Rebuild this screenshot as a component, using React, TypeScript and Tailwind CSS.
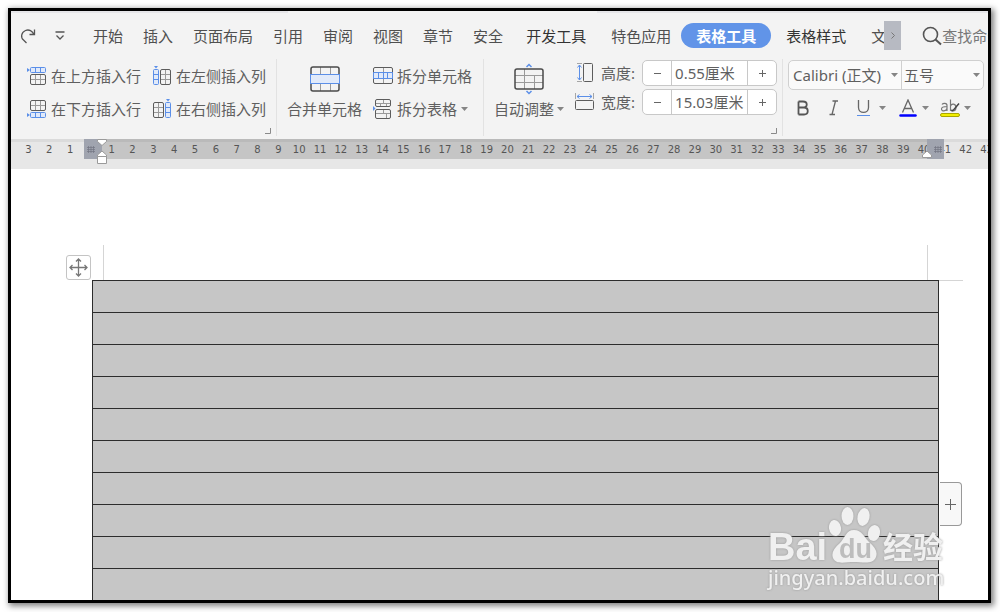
import type { ReactNode } from "react";

const blue = "#5b8fe8";
const ink = "#5c5c5c";

const Caret = ({ className = "" }: { className?: string }) => (
  <svg aria-hidden="true" className={`shrink-0 ${className}`} height="4" viewBox="0 0 7 4" width="7">
    <path d="M0 0h7L3.500 4z" fill="#858585" />
  </svg>
);

const Corner = () => (
  <button aria-label="更多设置" className="absolute right-[5px] bottom-[2px]" type="button">
    <svg height="6" viewBox="0 0 6 6" width="6">
      <path d="M5.500 0v5.500H0" fill="none" stroke="#8a8a8a" />
    </svg>
  </button>
);

const RowIcon = ({ below = false }: { below?: boolean }) => (
  <svg aria-hidden="true" fill="none" height="20" viewBox="0 0 20 20" width="20">
    <g transform={below ? "matrix(1 0 0 -1 0 20)" : undefined}>
      <path d="M0 2v4l3-2z" fill={blue} />
      <rect fill="#e1eafa" height="5" rx="1" stroke={blue} width="15" x="3.500" y="1.500" />
      <path d="M8.500 1.500v5M13.500 1.500v5" stroke={blue} />
      <path d="M4 13.500h15M8.500 9v10M13.500 9v10" stroke="#9a9a9a" />
      <rect height="10" rx="1.500" stroke={ink} width="15" x="3.500" y="8.500" />
    </g>
  </svg>
);

const ColumnIcon = ({ right = false }: { right?: boolean }) => (
  <svg aria-hidden="true" fill="none" height="20" viewBox="0 0 20 20" width="20">
    <g transform={right ? "matrix(-1 0 0 1 20 0)" : undefined}>
      <path d="M2 0h4L4 2.500z" fill={blue} />
      <rect fill="#e1eafa" height="15" rx="1" stroke={blue} width="5" x="1.500" y="3.500" />
      <path d="M1.500 8.500h5M1.500 13.500h5" stroke={blue} />
      <path d="M9 8.500h10M9 13.500h10M13.500 4v15" stroke="#9a9a9a" />
      <rect height="15" rx="1.500" stroke={ink} width="10" x="8.500" y="3.500" />
    </g>
  </svg>
);

const MergeIcon = () => (
  <svg aria-hidden="true" fill="none" height="26" viewBox="0 0 30 26" width="30">
    <path d="M10.500 1v24M20.500 1v24" stroke="#9a9a9a" />
    <rect height="24" rx="2" stroke="#4a4a4a" strokeWidth="1.500" width="28" x="1" y="1" />
    <rect fill="#e1eafa" height="9" stroke={blue} width="29" x="0.500" y="8.500" />
  </svg>
);

const SplitCellIcon = () => (
  <svg aria-hidden="true" fill="none" height="18" viewBox="0 0 20 18" width="20">
    <path d="M10.500 1v5M10.500 12v5" stroke="#9a9a9a" />
    <rect height="16" rx="1.500" stroke={ink} width="19" x="0.500" y="0.500" />
    <path d="M.5 5.500h19v6H.5zM5.500 5.500v6M10.500 5.500v6M14.500 5.500v6" fill="#e1eafa" stroke={blue} />
  </svg>
);

const SplitTableIcon = () => (
  <svg aria-hidden="true" fill="none" height="20" viewBox="0 0 20 20" width="20">
    <path d="M0 7v5l2.500-2.500z" fill={blue} />
    <path d="M3 4.500h15M10.500 1v3M7.500 5v3M13.500 5v3M3 14.500h15M10.500 11v4M13.500 15v4" stroke="#9a9a9a" />
    <rect height="7" rx="1.500" stroke={ink} width="15" x="2.500" y="0.500" />
    <rect height="9" rx="1.500" stroke={ink} width="15" x="2.500" y="10.500" />
  </svg>
);

const AutoFitIcon = () => (
  <svg aria-hidden="true" fill="none" height="32" viewBox="0 0 30 32" width="30">
    <path d="M12.500 4L15 1.500 17.500 4M12.500 28l2.500 2.500 2.500-2.500" stroke={blue} strokeWidth="1.500" />
    <path d="M1 12.500h28M1 19.500h28M10.500 6v7M10.500 19v7M10.500 13v6M20.500 13v13" stroke="#9a9a9a" />
    <rect height="20" rx="2" stroke="#4a4a4a" strokeWidth="1.500" width="28" x="1" y="6" />
  </svg>
);

const HeightIcon = () => (
  <svg aria-hidden="true" fill="none" height="20" viewBox="0 0 20 20" width="20">
    <path d="M2 .5h5M2 18.500h5" stroke="#a5a5a5" />
    <path d="M4.500 2v15M2.500 4.500l2-2.500 2 2.500M2.500 14.500l2 2.500 2-2.500" stroke={blue} />
    <rect height="18" rx="1" stroke={ink} width="9" x="8.500" y="0.500" />
  </svg>
);

const WidthIcon = () => (
  <svg aria-hidden="true" fill="none" height="20" viewBox="0 0 20 20" width="20">
    <path d="M.5 1v6M18.500 1v6" stroke="#a5a5a5" />
    <path d="M2 4.500h15M4.500 2.500l-2.500 2 2.500 2M14.500 2.500l2.500 2-2.500 2" stroke={blue} />
    <rect height="9" rx="1" stroke={ink} width="18" x="0.500" y="8.500" />
  </svg>
);

const Tool = ({ icon, children }: { icon: ReactNode; children: ReactNode }) => (
  <button className="flex h-[33px] items-center gap-1 whitespace-nowrap" type="button">
    <span className="flex w-5 justify-center">{icon}</span>
    {children}
  </button>
);

const Stepper = ({ id, label, value, icon }: { id: string; label: string; value: string; icon: ReactNode }) => (
  <div className="flex items-center">
    {icon}
    <label className="ml-[6px] w-[41px]" htmlFor={id}>
      {label}
    </label>
    <div className="flex h-[26px] w-[135px] rounded-[5px] border border-[#c8c8c8] bg-white">
      <button aria-label="减少" className="flex w-7 items-center justify-center" type="button">
        <svg height="9" viewBox="0 0 9 9" width="9">
          <path d="M1 4.500h7" stroke="#666" />
        </svg>
      </button>
      <input
        className="w-[77px] min-w-0 border-x border-[#c8c8c8] pl-[3px] outline-none"
        defaultValue={value}
        id={id}
        type="text"
      />
      <button aria-label="增加" className="flex flex-1 items-center justify-center" type="button">
        <svg height="9" viewBox="0 0 9 9" width="9">
          <path d="M1 4.500h7M4.500 1v7" stroke="#666" />
        </svg>
      </button>
    </div>
  </div>
);

const tabs = ["开始", "插入", "页面布局", "引用", "审阅", "视图", "章节", "安全"];

const TabBar = () => (
  <nav aria-label="功能区" className="flex h-[29px] items-center whitespace-nowrap text-[#4f4f4f]">
    <button aria-label="恢复" className="ml-[9px] w-4" type="button">
      <svg fill="none" height="16" viewBox="0 0 16 16" width="16">
        <path d="M14.500 1.500v5h-5M14 6.500C12.500 3 9 1 5.500 2.500 1 4.500.5 9.500 3.500 12L6.500 15" stroke="#555" strokeWidth="1.300" />
      </svg>
    </button>
    <button aria-label="自定义快速访问工具栏" className="ml-[19px] w-[10px]" type="button">
      <svg fill="none" height="10" viewBox="0 0 10 10" width="10">
        <path d="M.5 1h9M1.500 4.500L5 8l3.500-3.500" stroke="#555" strokeWidth="1.300" />
      </svg>
    </button>
    <div className="ml-7 flex gap-5">
      {tabs.map((tab) => (
        <button key={tab} type="button">
          {tab}
        </button>
      ))}
    </div>
    <button className="ml-[23px] text-[#333]" type="button">
      开发工具
    </button>
    <button className="ml-[25px]" type="button">
      特色应用
    </button>
    <button className="ml-[10px] h-[25px] w-[90px] rounded-full bg-[#6194e8] font-bold text-white" type="button">
      表格工具
    </button>
    <button className="ml-[15px] text-[#333]" type="button">
      表格样式
    </button>
    <button className="ml-[25px] w-[13px] overflow-hidden" type="button">
      文
    </button>
    <button aria-label="更多选项卡" className="flex h-full w-[17px] items-center justify-center bg-[#b7bac2]" type="button">
      <svg fill="none" height="7" viewBox="0 0 4 7" width="4">
        <path d="M.5.5l3 3-3 3" stroke="#777" />
      </svg>
    </button>
    <button className="ml-[21px] flex min-w-0 flex-1 items-center overflow-hidden text-[#777]" type="button">
      <svg className="shrink-0" fill="none" height="20" viewBox="0 0 20 20" width="20">
        <circle cx="8.500" cy="8.500" r="7" stroke="#555" strokeWidth="1.600" />
        <path d="M13.500 13.500l5.500 5" stroke="#555" strokeWidth="2" />
      </svg>
      查找命令
    </button>
  </nav>
);

const Toolbar = () => (
  <div className="flex h-[89px] pt-[9px] pb-[3px]">
    <div className="relative flex gap-[11px] border-r border-[#e2e2e2] pr-[10px] pl-4">
      <div>
        <Tool icon={<RowIcon />}>在上方插入行</Tool>
        <Tool icon={<RowIcon below />}>在下方插入行</Tool>
      </div>
      <div>
        <Tool icon={<ColumnIcon />}>在左侧插入列</Tool>
        <Tool icon={<ColumnIcon right />}>在右侧插入列</Tool>
      </div>
      <Corner />
    </div>
    <div className="flex gap-[11px] border-r border-[#e2e2e2] pr-[11px] pl-[10px]">
      <button className="flex h-[66px] flex-col items-center whitespace-nowrap" type="button">
        <span className="flex h-[39px] items-center">
          <MergeIcon />
        </span>
        合并单元格
      </button>
      <div>
        <Tool icon={<SplitCellIcon />}>拆分单元格</Tool>
        <Tool icon={<SplitTableIcon />}>
          拆分表格
          <Caret />
        </Tool>
      </div>
    </div>
    <div className="relative flex gap-[11px] border-r border-[#e2e2e2] pr-[5px] pl-[10px]">
      <button className="flex h-[66px] flex-col whitespace-nowrap" type="button">
        <span className="flex h-[39px] w-[69px] items-center justify-center">
          <AutoFitIcon />
        </span>
        <span className="flex items-center gap-[3px]">
          自动调整
          <Caret />
        </span>
      </button>
      <div className="flex flex-col gap-[3px] pt-px">
        <Stepper icon={<HeightIcon />} id="row-height" label="高度:" value="0.55厘米" />
        <Stepper icon={<WidthIcon />} id="column-width" label="宽度:" value="15.03厘米" />
      </div>
      <Corner />
    </div>
    <div className="w-[201px] pt-px pl-[5px]">
      <div className="flex h-[30px] rounded-[5px] border border-[#d0d0d0] bg-[#fafafa]">
        <div className="flex w-[113px] items-center border-r border-[#d0d0d0]">
          <select aria-label="字体" className="w-[102px] appearance-none pl-1 outline-none">
            <option>Calibri (正文)</option>
          </select>
          <Caret />
        </div>
        <div className="flex flex-1 items-center">
          <select aria-label="字号" className="w-[71px] appearance-none pl-[2px] outline-none">
            <option>五号</option>
          </select>
          <Caret />
        </div>
      </div>
      <div className="flex h-[35px] items-center">
        <button aria-label="加粗" className="flex w-[30px] justify-center" type="button">
          <svg fill="none" height="16" viewBox="0 0 12 16" width="12">
            <path d="M1.500 1.500v13M1.500 1.500H6c5 0 5 6 0 6H1.500H7c5 0 5 7 0 7H1.500" stroke="#555" strokeWidth="1.800" />
          </svg>
        </button>
        <button aria-label="倾斜" className="flex w-8 justify-center" type="button">
          <svg fill="none" height="16" viewBox="0 0 10 16" width="10">
            <path d="M3.500 1H9M.5 14.500H6M6.500 1l-3.500 13.500" stroke="#666" strokeWidth="1.300" />
          </svg>
        </button>
        <button aria-label="下划线" className="flex w-7 justify-center" type="button">
          <svg fill="none" height="18" viewBox="0 0 14 18" width="14">
            <path d="M1.500 1v7.500c0 6.500 10 6.500 10 0V1" stroke="#666" strokeWidth="1.300" />
            <path d="M0 16.500h13" stroke={blue} />
          </svg>
        </button>
        <Caret className="ml-px" />
        <button aria-label="字体颜色" className="ml-[13px]" type="button">
          <svg fill="none" height="18" viewBox="0 0 18 18" width="18">
            <path d="M3.500 13.500L9 1l5.500 12.500M5 9.500h8" stroke="#666" strokeWidth="1.300" />
            <path d="M1.500 16.500h15" stroke="#0000fe" strokeLinecap="round" strokeWidth="2.500" />
          </svg>
        </button>
        <Caret className="ml-[5px]" />
        <button aria-label="突出显示" className="ml-[11px]" type="button">
          <svg fill="none" height="18" viewBox="0 0 20 18" width="20">
            <path
              d="M2 5.500C3 4 7 3.500 7 6.500V12M7 7.500C4 7.500 1.500 8 1.500 10c0 2.500 4.500 2.500 5.500-.5M10.500.5V12M10.500 7c1-3 5.500-2.500 5.500 1.500s-4.500 4.500-5.500 1.500"
              stroke="#777"
              strokeWidth="1.200"
            />
            <path d="M19 4.500l-5.500 6.500-2 1" stroke="#444" strokeWidth="1.500" />
            <rect fill="#f2ee00" height="3" rx="1.500" stroke="#a9a600" width="19" x="0.500" y="14.500" />
          </svg>
        </button>
        <Caret className="ml-1" />
      </div>
    </div>
  </div>
);

const marks = ["3", "2", "1", "", ...Array.from({ length: 43 }, (_, i) => String(i + 1))];

const Grip = () => (
  <svg fill="none" height="7" viewBox="0 0 8 7" width="8">
    <path d="M0 1.500h8M0 3.500h8M0 5.500h8M1.500 0v7M4 0v7M6.500 0v7" stroke="#737683" strokeWidth="0.700" />
  </svg>
);

const Ruler = () => (
  <div className="relative h-[30px] overflow-hidden bg-[#e7e7e7]">
    <div className="mr-11 ml-[73px] h-5 bg-[#c5c5c5]" />
    <div className="absolute inset-x-0 top-0 h-[3px] bg-black/5" />
    <div className="absolute top-px right-[-9px] left-[7px] flex h-5 items-center font-['DejaVu_Sans'] text-[10px] text-[#555]">
      {marks.map((mark, i) => (
        <span className="w-0 flex-1 text-center" key={i}>
          {mark}
        </span>
      ))}
    </div>
    <div className="absolute top-0 left-[73px] flex h-5 w-[18px] items-center justify-center bg-[#a0a4af] pr-[5px]">
      <Grip />
    </div>
    <div className="absolute top-0 right-11 flex h-5 w-[17px] items-center justify-center bg-[#a0a4af] pl-1">
      <Grip />
    </div>
    <svg className="absolute top-0 left-[86px]" fill="#fff" height="27" viewBox="0 0 10 27" width="10">
      <path d="M.5.5h9v2L5 6.500.5 2.500zM.5 17.500V16L5 12l4.500 4v1.500zM.5 17.500h9v7h-9z" stroke="#9a9a9a" />
    </svg>
    <svg className="absolute top-[11px] right-[56px]" fill="#fff" height="9" viewBox="0 0 10 9" width="10">
      <path d="M.5 7.500V5L5 1l4.500 4v2.500z" stroke="#9a9a9a" />
    </svg>
  </div>
);

const Watermark = () => (
  <div className="absolute right-[41px] bottom-[9px] w-[179px] text-[#f0f0f0] drop-shadow-[0_0_1px_#999]">
    <div className="flex h-[62px] items-end whitespace-nowrap">
      <span className="w-[60px] font-['Liberation_Sans'] text-[38px] leading-[34px] font-bold">Bai</span>
      <div className="relative h-[62px] w-[55px]">
        <svg height="62" viewBox="0 0 55 62" width="55">
          <g fill="#f0f0f0">
            <ellipse cx="7" cy="26" rx="6" ry="8" transform="rotate(-10 7 26)" />
            <ellipse cx="19.500" cy="14" rx="6" ry="9" />
            <ellipse cx="35.500" cy="15" rx="6" ry="9" transform="rotate(12 35.500 15)" />
            <ellipse cx="46" cy="31" rx="6" ry="8" transform="rotate(12 46 31)" />
            <path d="M26 28c8 0 10 7 15 12 6 5 9 10 7 15-3 8-13 5-22 5S8 63 5 56c-2-5 1-10 7-15 5-5 6-13 14-13z" />
          </g>
        </svg>
        <span className="absolute top-[33px] left-[11px] font-['Liberation_Sans'] text-[27px] leading-[28px] font-bold text-[#bdbdbd]">
          du
        </span>
      </div>
      <span className="text-[30px] leading-[34px] font-bold">经验</span>
    </div>
    <div className="text-[20px] leading-[28px] font-medium">jingyan.baidu.com</div>
  </div>
);

const Document = () => (
  <main className="relative -mb-px bg-white pt-[111px] pr-[49px] pl-[81px]">
    <div className="absolute top-[76px] left-[92px] h-[35px] w-px bg-[#d5d5d5]" />
    <div className="absolute top-[76px] right-[60px] h-[35px] w-px bg-[#d5d5d5]" />
    <div className="absolute top-[111px] right-[25px] h-px w-6 bg-[#d5d5d5]" />
    <button
      aria-label="移动表格"
      className="absolute top-[86px] left-[55px] flex size-[25px] items-center justify-center rounded-[3px] border border-[#c4c4c4] bg-white"
      type="button"
    >
      <svg fill="none" height="19" viewBox="0 0 19 19" width="19">
        <path
          d="M9.500 1v17M1 9.500h17M7 3.500L9.500 1 12 3.500M7 15.500L9.500 18l2.500-2.500M3.500 7L1 9.500 3.500 12M15.500 7L18 9.500 15.500 12"
          stroke="#777"
          strokeWidth="1.300"
        />
      </svg>
    </button>
    <table aria-label="已选中的表格" className="h-[320px] w-full border-collapse bg-[#c6c6c6]">
      <tbody>
        {Array.from({ length: 10 }, (_, i) => (
          <tr key={i}>
            <td className="h-8 border border-[#2c2c2c] p-0" />
          </tr>
        ))}
      </tbody>
    </table>
    <button
      aria-label="添加列"
      className="absolute right-[26px] bottom-[75px] flex h-11 w-[22px] items-center justify-center rounded-r-[4px] border border-l-0 border-[#999] bg-[#f8f8f8]"
      type="button"
    >
      <svg height="11" viewBox="0 0 11 11" width="11">
        <path d="M0 5.500h11M5.500 0v11" stroke="#666" />
      </svg>
    </button>
    <Watermark />
  </main>
);

export default function App() {
  return (
    <div className="bg-white pt-2 pr-[9px] pb-[9px] pl-2 font-['Noto_Sans','Noto_Sans_CJK_SC',sans-serif] text-[15px] leading-[22px] text-[#5f5f5f]">
      <div className="overflow-hidden border-[3px] border-black bg-white shadow-[2px_2px_6px_1px_rgba(0,0,0,0.5)]">
        <header className="bg-[#f3f3f3]">
          <div className="flex h-[10px] items-start justify-between">
            <div className="h-[2px] w-[277px] bg-[#e6e6e9]" />
            <div className="h-[2px] w-[391px] bg-[#e6e6e9]" />
          </div>
          <TabBar />
          <Toolbar />
        </header>
        <Ruler />
        <Document />
      </div>
    </div>
  );
}
